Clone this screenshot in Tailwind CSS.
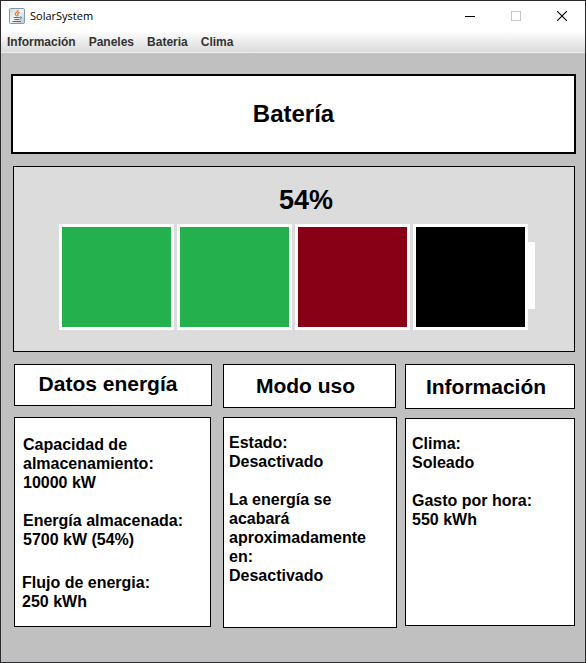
<!DOCTYPE html>
<html lang="es">
<head>
<meta charset="utf-8">
<meta name="viewport" content="width=device-width, initial-scale=1">
<title>SolarSystem</title>
<script src="https://cdn.jsdelivr.net/npm/@tailwindcss/browser@4"></script>
</head>
<body class="flex min-h-screen flex-col border border-[#2b2b2d] bg-[#c0c0c0] font-['Liberation_Sans',Arial,sans-serif] text-black">

<!-- Title bar -->
<header class="flex h-[30px] items-center bg-white pl-2">
  <svg class="size-4 shrink-0" viewBox="0 0 16 16" aria-hidden="true">
    <defs>
      <linearGradient id="tile" x1="0" y1="0" x2="1" y2="1">
        <stop offset="0" stop-color="#c3d3de"/><stop offset=".45" stop-color="#f4f7f9"/><stop offset="1" stop-color="#b4c6d3"/>
      </linearGradient>
    </defs>
    <rect x=".5" y=".5" width="15" height="15" rx="1" fill="url(#tile)" stroke="#7d99ae"/>
    <path d="M9.200 1.800C9.600 4 5.800 4.400 6.200 6.200c.2.900 1 1.300 1.300 2M10.600 4.400C8.800 5 8.300 5.600 8.900 6.400c.4.600.2 1.200-.4 1.800" fill="none" stroke="#e8772a" stroke-width="1.300"/>
    <path d="M4.600 9.500h6M5.400 11.500h5M11 9c2-.6 2 1.600 0 2M3.500 13.500h8.500" fill="none" stroke="#4c7391" stroke-width="1"/>
  </svg>
  <span class="ml-[5px] flex-1 font-['Open_Sans','Noto_Sans',sans-serif] text-[11px] leading-4">SolarSystem</span>
  <button type="button" aria-label="Minimizar" class="flex h-full w-[46px] items-center justify-center">
    <svg class="size-[10px]" viewBox="0 0 10 10" shape-rendering="crispEdges"><path d="M0 5h10v1H0z"/></svg>
  </button>
  <button type="button" aria-label="Maximizar" disabled class="flex h-full w-[46px] items-center justify-center">
    <svg class="size-[10px]" viewBox="0 0 10 10" fill="none" stroke="#c8c8c8"><rect x=".5" y=".5" width="9" height="9"/></svg>
  </button>
  <button type="button" aria-label="Cerrar" class="flex h-full w-[46px] items-center justify-center">
    <svg class="size-[10px]" viewBox="0 0 10 10" fill="none" stroke="#000" stroke-width="1.100"><path d="M0 0l10 10M10 0L0 10"/></svg>
  </button>
</header>

<!-- Menu bar -->
<nav class="flex h-[22px] items-center gap-[13px] border-b border-[#eeeeee] bg-linear-to-b from-white to-[#dadada] pl-1.5 text-[12px] leading-4 font-bold text-[#333333]">
  <button type="button">Información</button>
  <button type="button">Paneles</button>
  <button type="button">Bateria</button>
  <button type="button">Clima</button>
</nav>

<main class="px-2.5 pt-[21px] pb-[34px]">
  <h1 class="mr-[-1px] flex h-20 items-center justify-center border-2 border-black bg-white text-[24px] leading-7 font-bold">Batería</h1>

  <!-- Charge level -->
  <section class="mt-3 ml-0.5 border border-black bg-[#dcdcdc] pt-[17px] pr-[39px] pb-[21px] pl-[45px]">
    <p class="mb-2 pl-[18px] text-center text-[27px] leading-8 font-bold">54%</p>
    <div class="flex items-center" role="img" aria-label="Nivel de batería 54%">
      <div class="grid flex-1 grid-cols-4 gap-[3px]">
        <div class="h-[106px] border-3 border-white bg-[#24b14d]"></div>
        <div class="h-[106px] border-3 border-white bg-[#24b14d]"></div>
        <div class="h-[106px] border-3 border-white bg-[#880015]"></div>
        <div class="h-[106px] border-3 border-white bg-black"></div>
      </div>
      <div class="mb-[3px] h-[67px] w-[7px] bg-white"></div>
    </div>
  </section>

  <!-- Detail columns -->
  <div class="mt-3 ml-[3px] grid grid-cols-[200fr_173fr_170fr] items-start gap-x-[9px]">
    <section>
      <h2 class="mr-0.5 mb-[11px] flex h-[42px] items-center justify-center border border-black bg-white pr-2.5 pb-0.5 text-[21px] leading-6 font-bold">Datos energía</h2>
      <div class="mr-[3px] min-h-[210px] border border-black bg-white pt-[17px] pl-2 text-[16px] leading-[19px] font-bold">
        <p>Capacidad de<br>almacenamiento:<br>10000 kW</p>
        <p class="mt-[19px]">Energía almacenada:<br>5700 kW (54%)</p>
        <p class="mt-6 -ml-px">Flujo de energia:<br>250 kWh</p>
      </div>
    </section>
    <section>
      <h2 class="mb-[9px] flex h-11 items-center justify-center border border-black bg-white pr-2 text-[21px] leading-6 font-bold">Modo uso</h2>
      <div class="mr-[-1px] min-h-[211px] border border-black bg-white pt-[15px] pl-[5px] text-[16px] leading-[19px] font-bold">
        <p>Estado:<br>Desactivado</p>
        <p class="mt-[19px]">La energía se<br>acabará<br>aproximadamente<br>en:<br>Desactivado</p>
      </div>
    </section>
    <section>
      <h2 class="mb-[9px] flex h-[45px] items-center justify-center border border-black bg-white pr-2 text-[21px] leading-6 font-bold">Información</h2>
      <div class="min-h-[208px] border border-black bg-white pt-[15px] pl-1.5 text-[16px] leading-[19px] font-bold">
        <p>Clima:<br>Soleado</p>
        <p class="mt-[19px]">Gasto por hora:<br>550 kWh</p>
      </div>
    </section>
  </div>
</main>
</body>
</html>
